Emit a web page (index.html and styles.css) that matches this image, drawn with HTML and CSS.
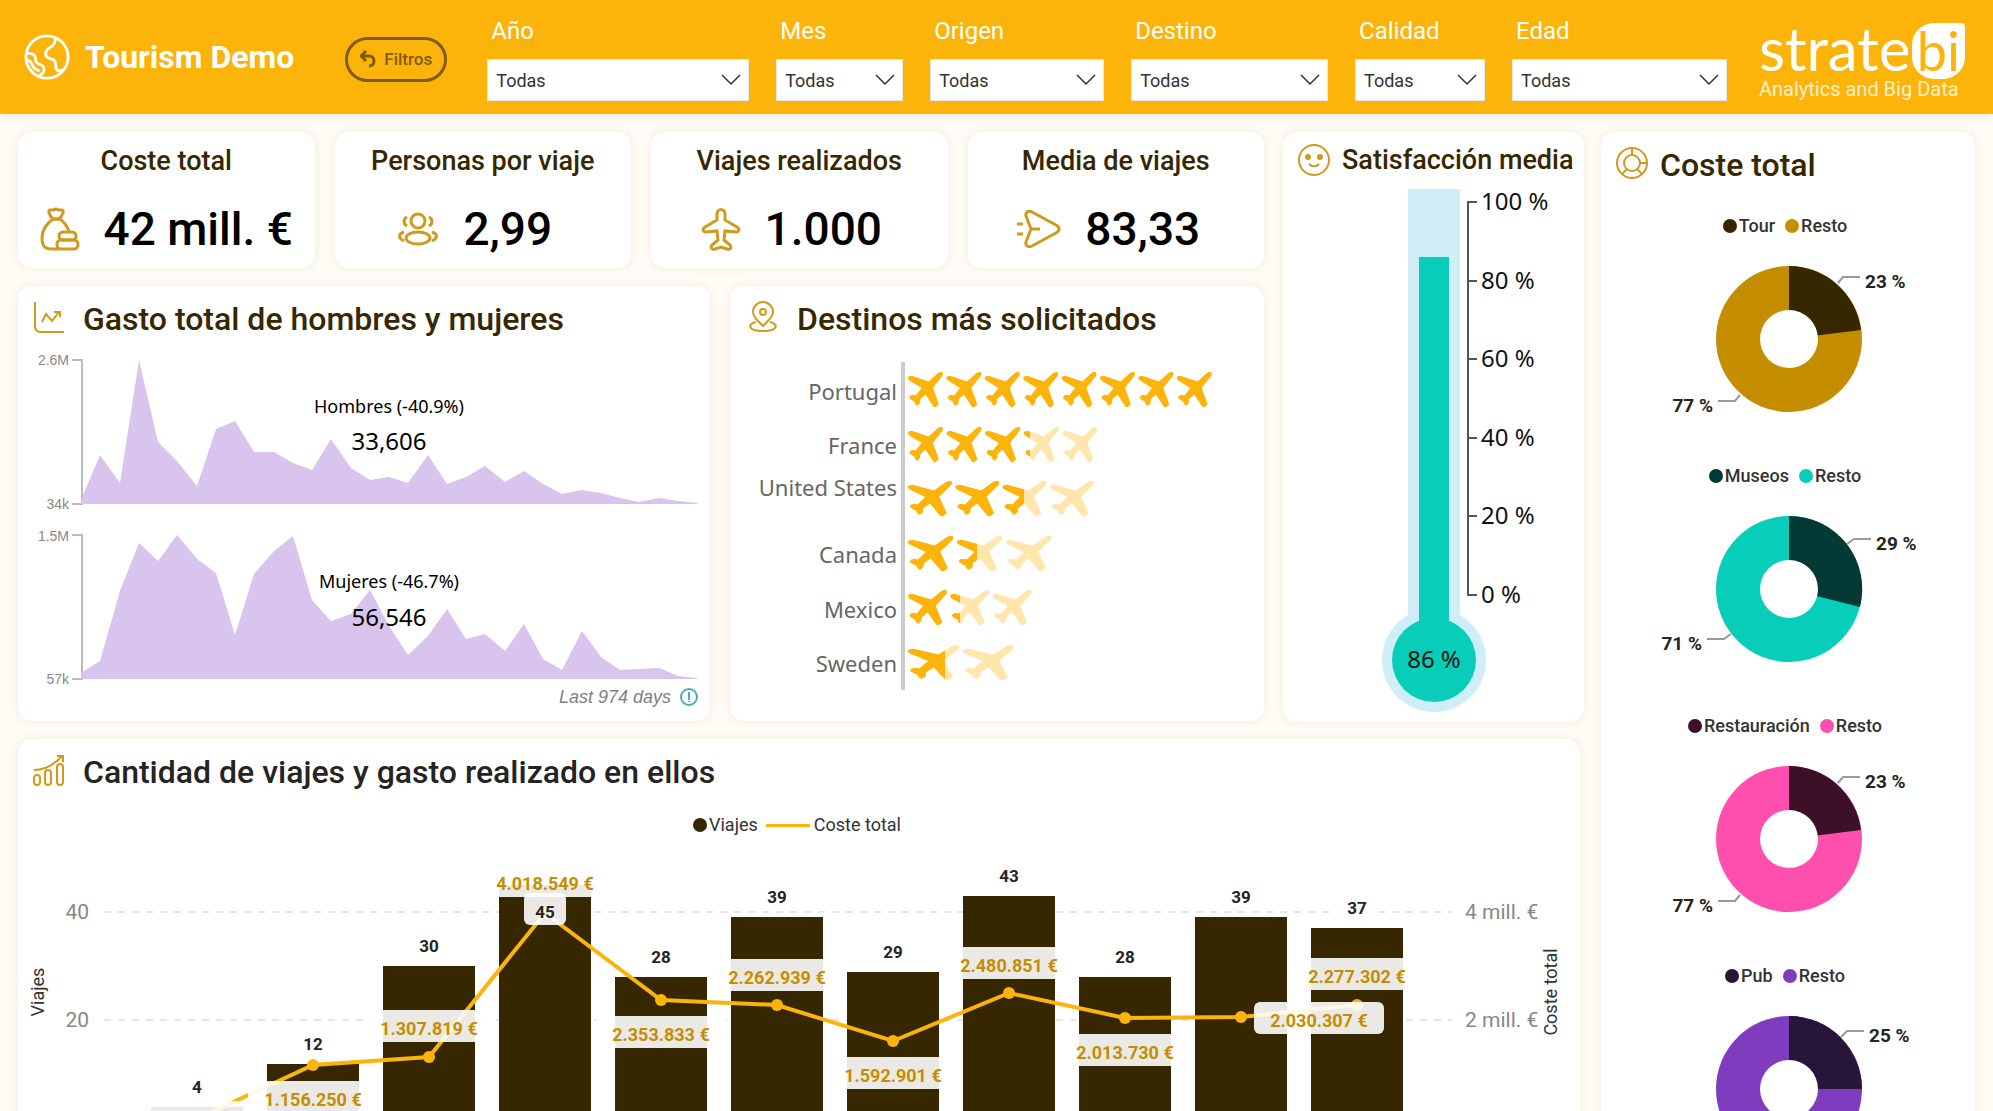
FILE: index.html
```html
<!DOCTYPE html>
<html lang="es">
<head>
    <meta charset="UTF-8">
    <meta name="viewport" content="width=device-width, initial-scale=1.0">
    <title>Tourism Demo</title>
    <link rel="stylesheet" href="styles.css">
</head>
<body>
    <header class="topbar">
        <div class="brand">
            <svg class="brand-icon" viewBox="0 0 48 48">
                <circle cx="24" cy="24" r="22"/>
                <path d="M33 5c-1 5-2 7-6 9-4 2-6 6-3 10 2 3 6 1 8 4s0 8 3 10c2 1 4 0 6-1"/>
                <path d="M3 20c5 0 9 1 9 6 0 4 2 5 5 6 4 1 5 5 3 8-1 2-3 3-5 4M2 27c4 0 6 3 7 6 1 4 5 4 7 6"/>
            </svg>
            <h1>Tourism Demo</h1>
        </div>
        <button class="reset" type="button">
            <svg viewBox="0 0 16 18"><path d="M6 1 1 6l5 5M2 6h7c3 0 5 2 5 5s-2 5-5 5"/></svg>
            Filtros
        </button>
        <form class="filters">
            <label>Año<select><option>Todas</option></select></label>
            <label>Mes<select><option>Todas</option></select></label>
            <label>Origen<select><option>Todas</option></select></label>
            <label>Destino<select><option>Todas</option></select></label>
            <label>Calidad<select><option>Todas</option></select></label>
            <label>Edad<select><option>Todas</option></select></label>
        </form>
        <div class="logo">
            <div class="logo-name">strate<span class="logo-box">bi</span></div>
            <div class="logo-sub">Analytics and Big Data</div>
        </div>
    </header>

    <main class="dashboard">
        <div class="main-col">
            <div class="upper">
                <div class="upper-left">
                    <section class="kpis">
                        <article class="card kpi">
                            <h3>Coste total</h3>
                            <div class="kpi-body">
                                <svg class="kpi-icon" width="40" height="44" viewBox="0 0 40 44">
                                    <path d="M13 12C9 8 7 2 11 3c2 1 3-1 5-1s3 2 5 1c4-1 2 5-2 9z"/>
                                    <path d="M13 12h7M13 12C6 17 2 24 2 31c0 8 3 11 9 11h8M20 12c4 3 7 7 9 12"/>
                                    <rect x="19" y="25" width="17" height="8" rx="4"/>
                                    <rect x="17" y="33" width="21" height="9" rx="4"/>
                                </svg>
                                <span>42 mill. €</span>
                            </div>
                        </article>
                        <article class="card kpi">
                            <h3>Personas por viaje</h3>
                            <div class="kpi-body">
                                <svg class="kpi-icon" width="42" height="34" viewBox="0 0 42 34">
                                    <circle cx="21" cy="9" r="7"/>
                                    <ellipse cx="21" cy="26" rx="12" ry="6"/>
                                    <path d="M10 5c-4 2-4 7 0 9M32 5c4 2 4 7 0 9M7 20c-6 2-6 6 0 9M35 20c6 2 6 6 0 9"/>
                                </svg>
                                <span>2,99</span>
                            </div>
                        </article>
                        <article class="card kpi">
                            <h3>Viajes realizados</h3>
                            <div class="kpi-body">
                                <svg class="kpi-icon" width="40" height="44" viewBox="0 0 40 44">
                                    <path d="M16 13V7c0-6 8-6 8 0v6l12 7c3 2 2 5-1 5l-11-1-1 9 6 5c2 3 0 5-3 4l-6-2-6 2c-3 1-5-1-3-4l6-5-1-9-11 1c-3 0-4-3-1-5z"/>
                                </svg>
                                <span>1.000</span>
                            </div>
                        </article>
                        <article class="card kpi">
                            <h3>Media de viajes</h3>
                            <div class="kpi-body">
                                <svg class="kpi-icon" width="46" height="38" viewBox="0 0 46 38">
                                    <path d="M11 6c-1-4 3-6 6-4l24 13c4 2 4 6 0 8L17 36c-4 2-7-1-6-4l5-13zM16 19h9M2 14h6M2 24h6"/>
                                </svg>
                                <span>83,33</span>
                            </div>
                        </article>
                    </section>

                    <section class="middle">
                        <article class="card">
                            <div class="card-head">
                                <svg class="head-icon" viewBox="0 0 32 32">
                                    <path d="M2 1v24c0 4 2 6 6 6h23M9 21l4-8 6 7 7-9M21 11h6v5"/>
                                </svg>
                                <h2>Gasto total de hombres y mujeres</h2>
                            </div>
                            <svg class="chart" id="gasto" viewBox="0 0 692 371">
                                <g class="spark-axis">
                                    <path d="M54 10h10v144H54M54 185h10v144H54"/>
                                    <text x="51" y="15">2.6M</text>
                                    <text x="51" y="159">34k</text>
                                    <text x="51" y="191">1.5M</text>
                                    <text x="51" y="334">57k</text>
                                </g>
                                <g id="areas"></g>
                                <text class="spark-name" x="371" y="63">Hombres (-40.9%)</text>
                                <text class="spark-value" x="371" y="100">33,606</text>
                                <text class="spark-name" x="371" y="238">Mujeres (-46.7%)</text>
                                <text class="spark-value" x="371" y="276">56,546</text>
                                <text class="spark-note" x="653" y="353">Last 974 days</text>
                                <circle class="info" cx="671" cy="347" r="8"/>
                                <path class="info" d="M671 342v8M671 351v1"/>
                            </svg>
                        </article>
                        <article class="card">
                            <div class="card-head card-head-wide">
                                <svg class="head-icon" viewBox="0 0 32 32">
                                    <path d="M16 25C9 18 6 15 6 11a10 10 0 0 1 20 0c0 4-3 7-10 14z"/>
                                    <circle cx="16" cy="11" r="3"/>
                                    <path d="M9 21c-9 2-8 9 7 9s16-7 7-9"/>
                                </svg>
                                <h2>Destinos más solicitados</h2>
                            </div>
                            <svg class="chart" id="destinos" viewBox="0 -2 534 370">
                                <rect x="171" y="10" width="4" height="328" fill="#ccc"/>
                            </svg>
                        </article>
                    </section>
                </div>

                <article class="card satisfaction">
                    <div class="card-head card-head-small">
                        <svg class="head-icon" viewBox="0 0 32 32">
                            <circle cx="16" cy="16" r="15"/>
                            <path d="M11 20c3 3 7 3 10 0"/>
                            <circle class="solid" cx="10" cy="13" r="2"/>
                            <circle class="solid" cx="22" cy="13" r="2"/>
                        </svg>
                        <h3>Satisfacción media</h3>
                    </div>
                    <svg class="chart" id="thermo" viewBox="0 0 301 538">
                        <path fill="#d0eef8" d="M125 5h52v425h-52z"/>
                        <circle fill="#d0eef8" cx="151" cy="476" r="52"/>
                        <circle fill="#07cdb9" cx="151" cy="476" r="42"/>
                        <path fill="#07cdb9" d="M136 73h30v370h-30z"/>
                        <text x="151" y="484" text-anchor="middle">86 %</text>
                    </svg>
                </article>
            </div>

            <article class="card trips">
                <div class="card-head">
                    <svg class="head-icon" viewBox="0 0 32 32">
                        <rect x="1" y="21" width="6" height="10" rx="3"/>
                        <rect x="12" y="16" width="6" height="15" rx="3"/>
                        <rect x="24" y="10" width="6" height="21" rx="3"/>
                        <path d="M1 16c11 0 20-5 28-14M24 2h6v6"/>
                    </svg>
                    <h2>Cantidad de viajes y gasto realizado en ellos</h2>
                </div>
                <div class="legend">
                    <span class="dot" style="background: #372700"></span>Viajes
                    <span class="line"></span>Coste total
                </div>
                <svg class="chart" id="trips" viewBox="0 0 1562 330"></svg>
            </article>
        </div>

        <aside class="card side">
            <div class="card-head card-head-side">
                <svg class="head-icon" viewBox="0 0 32 32">
                    <circle cx="16" cy="16" r="15"/>
                    <circle cx="16" cy="16" r="8"/>
                    <path d="M16 1v7M24 16h7M21 22l5 5M11 22l-5 5"/>
                </svg>
                <h2>Coste total</h2>
            </div>
            <div id="donuts"></div>
        </aside>
    </main>

    <script>
        // Evolución del gasto (altura en px sobre la base)
        const hombres = [4, 49, 21, 144, 62, 43, 18, 75, 83, 52, 52, 41, 34, 65, 36, 24, 27, 21, 49, 20, 27, 38, 22, 33, 20, 10, 14, 11, 6, 2, 6, 3, 1];
        const mujeres = [6, 18, 88, 136, 118, 144, 120, 106, 44, 105, 128, 143, 79, 58, 65, 89, 53, 24, 43, 70, 40, 45, 28, 55, 20, 9, 48, 22, 9, 10, 11, 3, 1];

        function area(values, base) {
            const step = 616 / (values.length - 1);
            const points = values.map((v, i) => `${Math.round(63 + i * step)},${base - v}`);
            return `<polygon points="63,${base} ${points.join(' ')} 679,${base}"/>`;
        }
        document.getElementById('areas').innerHTML = area(hombres, 154) + area(mujeres, 329);

        // Destinos: n aviones, ancho de cada uno y posición donde acaba el relleno
        const destinos = [
            { name: 'Portugal', label: 48, top: 20, n: 8, pitch: 38.4, width: 35, fill: 534 },
            { name: 'France', label: 102, top: 75, n: 5, pitch: 38.6, width: 35, fill: 300 },
            { name: 'United States', label: 144, top: 129, n: 4, pitch: 47.3, width: 44, fill: 294 },
            { name: 'Canada', label: 211, top: 184, n: 3, pitch: 49, width: 45.4, fill: 247 },
            { name: 'Mexico', label: 266, top: 238, n: 3, pitch: 42.3, width: 39, fill: 230 },
            { name: 'Sweden', label: 320, top: 293, n: 2, pitch: 54.6, width: 51.4, fill: 215 }
        ];
        const plane = 'M86 3Q93-2 98 1Q102 5 98 12L71 46L88 95L80 103Q75 106 71 99L50 66L35 80L34 92L27 99Q21 98 18 87Q5 80 4 75Q7 67 14 68L22 69L39 47L3 24Q-2 20 1 14L10 11L59 28Z';

        destinos.forEach((d, row) => {
            let planes = '';
            for (let i = 0; i < d.n; i++) {
                planes += `<path d="${plane}" transform="translate(${178 + i * d.pitch} ${d.top}) scale(${d.width / 100} 0.34)"/>`;
            }
            document.getElementById('destinos').innerHTML += `
                <text class="country" x="167" y="${d.label}">${d.name}</text>
                <clipPath id="clip${row}"><rect x="170" y="0" width="${d.fill - 170}" height="370"/></clipPath>
                <g fill="#ffe6ac">${planes}</g>
                <g fill="#fcb40b" clip-path="url(#clip${row})">${planes}</g>`;
        });

        // Escala del termómetro
        let scale = '<path class="scale" d="M194 18H185V411H194"/>';
        for (let i = 0; i <= 5; i++) {
            const y = Math.round(18 + i * 78.6);
            scale += `<path class="scale" d="M185 ${y}h9"/><text x="198" y="${y + 8}">${100 - i * 20} %</text>`;
        }
        document.getElementById('thermo').innerHTML += scale;

        // Viajes y coste por mes
        const viajes = [
            { n: 4, y: 280, label: '', ly: 262 },
            { n: 12, y: 226, label: '1.156.250 €', ly: 242 },
            { n: 30, y: 218, label: '1.307.819 €', ly: 171 },
            { n: 45, y: 74, label: '4.018.549 €', ly: 26, ny: 54 },
            { n: 28, y: 161, label: '2.353.833 €', ly: 177 },
            { n: 39, y: 166, label: '2.262.939 €', ly: 120 },
            { n: 29, y: 202, label: '1.592.901 €', ly: 218 },
            { n: 43, y: 154, label: '2.480.851 €', ly: 108 },
            { n: 28, y: 179, label: '2.013.730 €', ly: 195 },
            { n: 39, y: 178, label: '2.030.307 €', ly: 163, dx: 78 },
            { n: 37, y: 166, label: '2.277.302 €', ly: 119 }
        ];
        const cx = i => 179 + i * 116;
        let bars = '', dots = '', labels = '';
        viajes.forEach((v, i) => {
            const top = Math.round(290 - v.n * 5.43);
            const lx = cx(i) + (v.dx || 0);
            const ny = v.ny || top - 39;
            bars += `<rect x="${cx(i) - 46}" y="${top}" width="92" height="${330 - top}"/>`;
            dots += `<circle cx="${cx(i)}" cy="${v.y}" r="6"/>`;
            labels += `<rect x="${lx - 65}" y="${v.ly}" width="130" height="32" rx="6"/>
                <rect x="${cx(i) - 21}" y="${ny}" width="42" height="32" rx="6"/>
                <text class="cost" x="${lx}" y="${v.ly + 25}">${v.label}</text>
                <text class="count" x="${cx(i)}" y="${ny + 25}">${v.n}</text>`;
        });
        const line = viajes.map((v, i) => `${cx(i)},${v.y}`).join(' ');
        document.getElementById('trips').innerHTML = `
            <path class="grid" d="M86 73H1434M86 181H1434"/>
            <text class="axis" x="71" y="80" text-anchor="end">40</text>
            <text class="axis" x="71" y="188" text-anchor="end">20</text>
            <text class="axis" x="1447" y="80">4 mill. €</text>
            <text class="axis" x="1447" y="188">2 mill. €</text>
            <text class="axis-title" transform="translate(26 153) rotate(-90)">Viajes</text>
            <text class="axis-title" transform="translate(1539 153) rotate(-90)">Coste total</text>
            <g fill="#372700">${bars}</g>
            <polyline class="cost-line" points="${line}"/>
            <g fill="#fcb40b">${dots}</g>
            <g fill="#fff" fill-opacity="0.9">${labels}</g>`;

        // Donuts
        const donuts = [
            { name: 'Tour', pct: 23, dark: '#372700', light: '#c58e00' },
            { name: 'Museos', pct: 29, dark: '#033a35', light: '#07cdb9' },
            { name: 'Restauración', pct: 23, dark: '#3c1128', light: '#ff4fae' },
            { name: 'Pub', pct: 25, dark: '#27153a', light: '#7f3cbf' }
        ];
        document.getElementById('donuts').innerHTML = donuts.map(d => {
            const end = d.pct / 100 * 2 * Math.PI;
            const x = r => Math.round(r * Math.sin(end));
            const y = r => Math.round(-r * Math.cos(end));
            const mx = r => Math.round(r * Math.sin(end / 2));
            const my = r => Math.round(-r * Math.cos(end / 2));
            return `<figure class="donut">
                <figcaption class="legend">
                    <span class="dot" style="background: ${d.dark}"></span>${d.name}
                    <span class="dot" style="background: ${d.light}"></span>Resto
                </figcaption>
                <svg class="chart" viewBox="-188 -101 374 226">
                    <circle r="73" fill="${d.light}"/>
                    <path fill="${d.dark}" d="M0 0V-73A73 73 0 0 1 ${x(73)} ${y(73)}Z"/>
                    <circle r="29" fill="#fff"/>
                    <path class="leader" d="M${mx(74)} ${my(74)}L${mx(82)} ${my(82)}h17M${-mx(74)} ${-my(74)}L${-mx(82)} ${-my(82)}h-17"/>
                    <text x="${mx(82) + 22}" y="${my(82) + 11}">${d.pct} %</text>
                    <text x="${-mx(82) - 22}" y="${-my(82) + 11}" text-anchor="end">${100 - d.pct} %</text>
                </svg>
            </figure>`;
        }).join('');
    </script>
</body>
</html>
```
FILE: styles.css
```css
* {
    box-sizing: border-box;
}

body {
    margin: 0;
    height: 100vh;
    overflow: hidden;
    background: #fffcf5;
    color: #372700;
    font-family: Roboto, "Open Sans", sans-serif;
}

h1, h2, h3, figure {
    margin: 0;
    font-weight: 500;
}

/* header */
.topbar {
    display: flex;
    align-items: center;
    height: 114px;
    padding: 0 28px 0 24px;
    background: #fcb40b;
    box-shadow: 0 2px 10px rgba(0, 0, 0, 0.08);
    color: #fff;
}

.brand {
    display: flex;
    align-items: center;
    gap: 15px;
}

.brand h1 {
    font-size: 32px;
    font-weight: 700;
}

.brand-icon {
    width: 46px;
    height: 46px;
    fill: none;
    stroke: #fff;
    stroke-width: 3;
}

.reset {
    display: flex;
    align-items: center;
    justify-content: center;
    gap: 8px;
    width: 102px;
    height: 45px;
    margin: 4px 40px 0 51px;
    padding: 0;
    background: none;
    border: 3px solid #805b00;
    border-radius: 23px;
    color: #805b00;
    font: 500 17px Roboto, sans-serif;
    cursor: pointer;
}

.reset svg {
    width: 16px;
    height: 18px;
    fill: none;
    stroke: #805b00;
    stroke-width: 3;
}

.filters {
    flex: 1;
    display: grid;
    grid-template-columns: 262fr 127fr 174fr 197fr 130fr 215fr;
    gap: 27px;
    margin-top: 4px;
}

.filters label {
    font-size: 24px;
    line-height: 28px;
    text-indent: 4px;
}

.filters select {
    display: block;
    width: 100%;
    height: 42px;
    margin-top: 14px;
    padding: 0 8px;
    appearance: none;
    border: 1px solid #e6e6e6;
    border-radius: 0;
    background: #fff url('data:image/svg+xml,<svg xmlns="http://www.w3.org/2000/svg" width="20" height="12"><path d="M1 1l9 9 9-9" fill="none" stroke="%23333" stroke-width="1.5"/></svg>') no-repeat right 7px center;
    color: #333;
    font: 18px Roboto, sans-serif;
}

.logo {
    width: 206px;
    margin: 4px 0 0 32px;
}

.logo-name {
    display: flex;
    justify-content: space-between;
    align-items: baseline;
    font: 60px/56px Lato, sans-serif;
}

.logo-box {
    padding: 0 5px;
    background: #fff;
    border-radius: 22px 4px 22px 22px;
    color: #fcb40b;
    font-size: 54px;
}

.logo-sub {
    font-size: 20px;
    line-height: 20px;
    white-space: nowrap;
    color: #fff0cc;
}

/* layout */
.dashboard {
    display: flex;
    gap: 17px;
    padding: 18px;
}

.main-col {
    flex: 1;
    min-width: 0;
}

.upper {
    display: flex;
    gap: 19px;
    margin-bottom: 17px;
}

.upper-left {
    flex: 1;
}

.satisfaction {
    width: 301px;
}

.side {
    width: 374px;
}

.kpis {
    display: grid;
    grid-template-columns: repeat(4, 1fr);
    gap: 20px;
    margin-bottom: 18px;
}

.middle {
    display: grid;
    grid-template-columns: 692fr 534fr;
    gap: 20px;
}

.trips {
    margin-right: 4px;
}

.card {
    background: #fff;
    border-radius: 14px;
    box-shadow: 0 0 10px rgba(60, 40, 0, 0.08);
}

.card-head {
    display: flex;
    align-items: flex-start;
    gap: 18px;
    height: 64px;
    padding: 15px 15px 0;
}

.card-head h2 {
    font-size: 32px;
    line-height: 36px;
}

.card-head-wide {
    padding-left: 17px;
}

.card-head-side {
    gap: 12px;
}

.card-head-small {
    gap: 12px;
    height: 52px;
    padding: 12px 0 0 15px;
    white-space: nowrap;
}

.head-icon {
    flex: none;
    width: 32px;
    height: 32px;
}

.head-icon, .kpi-icon {
    fill: none;
    stroke: #d09a1c;
    stroke-width: 2;
}

.kpi-icon {
    stroke-width: 3;
}

.head-icon .solid {
    fill: #d09a1c;
}

/* kpi cards */
.kpi {
    height: 136px;
    padding-top: 13px;
    text-align: center;
}

h3 {
    font-size: 27px;
    line-height: 32px;
}

.kpi-body {
    display: flex;
    align-items: center;
    justify-content: center;
    gap: 24px;
    margin-top: 24px;
    color: #000;
    font-size: 46px;
    font-weight: 500;
    line-height: 56px;
}

.kpi + .kpi .kpi-body {
    padding-right: 16px;
}

/* charts */
.chart {
    display: block;
    width: 100%;
}

.spark-axis path {
    fill: none;
    stroke: #bbb;
    stroke-width: 2;
}

.spark-axis text {
    font: 14px "Liberation Sans", sans-serif;
    fill: #888;
    text-anchor: end;
}

#areas {
    fill: #d8c4ec;
}

.spark-name, .spark-value {
    font: 18px "Noto Sans", sans-serif;
    fill: #000;
    text-anchor: middle;
}

.spark-value {
    font-size: 24px;
}

.spark-note {
    font: italic 18px "Liberation Sans", sans-serif;
    fill: #808080;
    text-anchor: end;
}

.info {
    fill: none;
    stroke: #4fa8c6;
    stroke-width: 2;
}

.country {
    font: 22px "Noto Sans", sans-serif;
    fill: #666;
    text-anchor: end;
}

#thermo text {
    font: 24px "Noto Sans", sans-serif;
    fill: #111;
}

.scale {
    fill: none;
    stroke: #555;
    stroke-width: 2;
}

.legend {
    display: flex;
    align-items: center;
    justify-content: center;
    gap: 2px;
    color: #333;
    font-size: 18px;
    line-height: 24px;
}

.dot {
    width: 14px;
    height: 14px;
    border-radius: 50%;
}

.legend .dot + .dot {
    margin-left: 8px;
}

.legend .line {
    width: 44px;
    height: 3px;
    margin: 0 2px 0 6px;
    background: #fcb40b;
}

.trips h2 {
    color: #252423;
}

.trips .legend {
    margin: 10px 0 2px;
    padding-right: 4px;
}

.grid {
    stroke: #e6e6e6;
    stroke-width: 2;
    stroke-dasharray: 7 7;
}

.axis {
    font-size: 21px;
    fill: #888;
}

.axis-title {
    font-size: 18px;
    fill: #333;
    text-anchor: middle;
}

.cost-line {
    fill: none;
    stroke: #fcb40b;
    stroke-width: 4;
}

.cost, .count {
    font-size: 18px;
    font-weight: 700;
    fill: #c58e00;
    fill-opacity: 1;
    text-anchor: middle;
}

.count {
    font-size: 17px;
    fill: #252423;
}

.donut {
    height: 250px;
}

#donuts {
    padding-top: 18px;
}

.donut .legend {
    padding-right: 6px;
}

.donut text {
    font-size: 19px;
    font-weight: 700;
    fill: #252423;
}

.leader {
    fill: none;
    stroke: #999;
    stroke-width: 2;
}
```
